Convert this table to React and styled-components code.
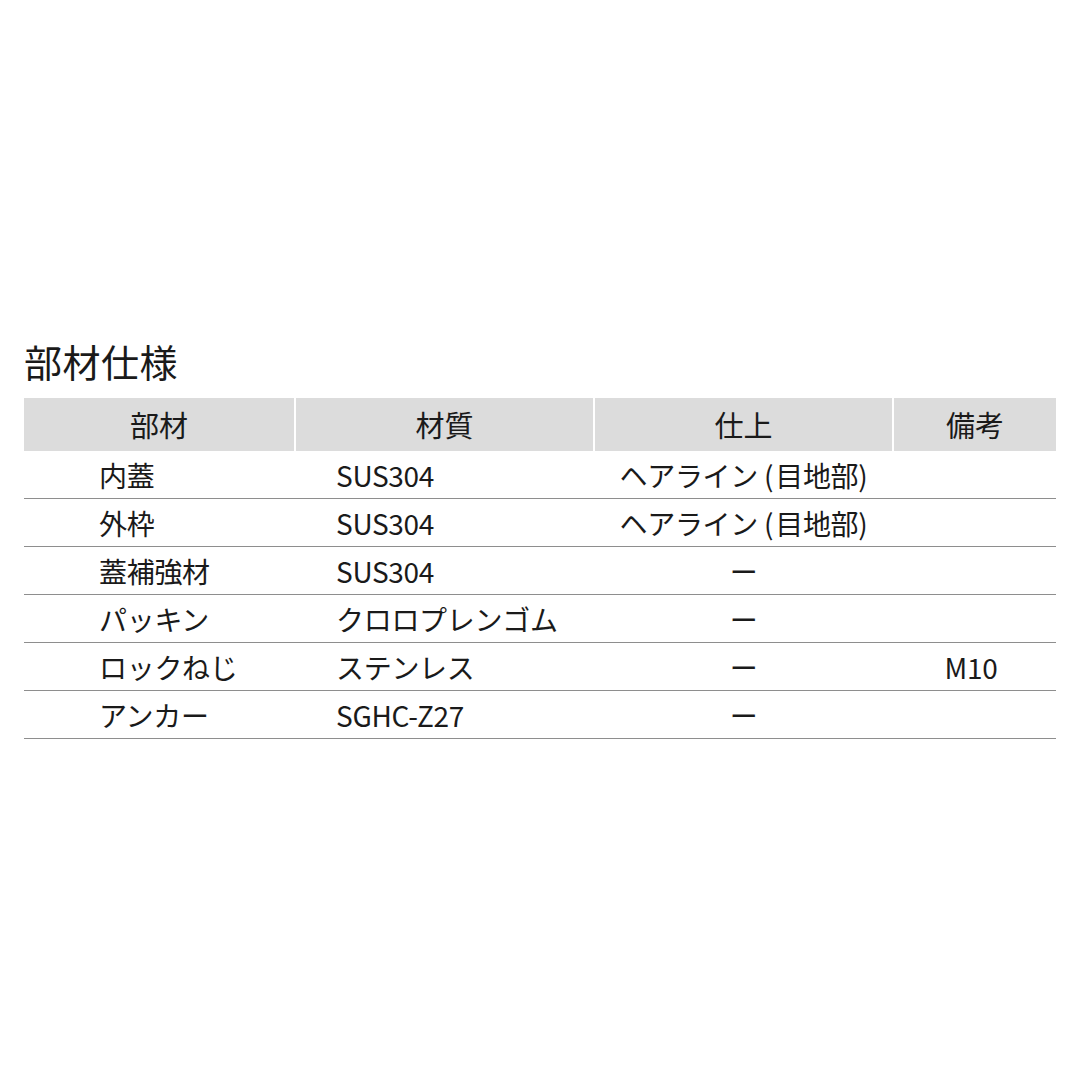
import styled, { createGlobalStyle } from "styled-components";

const GlobalStyle = createGlobalStyle`
  html, body { margin: 0; padding: 0; background: #fff; }
  body { font-family: "Noto Sans CJK JP", "Noto Sans", sans-serif; color: #1a1a1a; }
`;

const Page = styled.div`
  width: 1080px;
  height: 1080px;
  box-sizing: border-box;
  padding: 334px 24px 0 24px;
`;

const Title = styled.h1`
  margin: 0 0 10px 0;
  font-size: 38px;
  font-weight: 400;
  line-height: 54px;
  letter-spacing: 0.5px;
`;

const Row = styled.div`
  display: grid;
  grid-template-columns: 270px 297px 297px 162px;
  column-gap: 2px;
  height: ${p => (p.$head ? "53px" : "47px")};
  border-bottom: ${p => (p.$head ? "none" : "1px solid #8e8e8e")};
`;

const HeadCell = styled.div`
  background: #dcdcdc;
  display: flex;
  align-items: center;
  justify-content: center;
  font-size: 29px;
  line-height: 1;
`;

const Cell = styled.div`
  display: flex;
  align-items: center;
  justify-content: ${p => (p.$center ? "center" : "flex-start")};
  padding-left: ${p => p.$pad || 0}px;
  padding-right: ${p => p.$padR || 0}px;
  font-size: 28px;
  line-height: 1;
  white-space: nowrap;
  letter-spacing: -0.3px;
`;

const Paren = styled.span`
  margin: 0 2px 0 6px;
`;

const Finish = ({ text }) => {
  if (text !== "hairline") return text;
  return (
    <span>
      ヘアライン<Paren>(</Paren>目地部)
    </span>
  );
};

const rows = [
  ["内蓋", "SUS304", "hairline", ""],
  ["外枠", "SUS304", "hairline", ""],
  ["蓋補強材", "SUS304", "ー", ""],
  ["パッキン", "クロロプレンゴム", "ー", ""],
  ["ロックねじ", "ステンレス", "ー", "M10"],
  ["アンカー", "SGHC-Z27", "ー", ""],
];

export default function App() {
  return (
    <Page>
      <GlobalStyle />
      <Title>部材仕様</Title>
      <Row $head>
        <HeadCell>部材</HeadCell>
        <HeadCell>材質</HeadCell>
        <HeadCell>仕上</HeadCell>
        <HeadCell>備考</HeadCell>
      </Row>
      {rows.map((r, i) => (
        <Row key={i}>
          <Cell $pad={75}>{r[0]}</Cell>
          <Cell $pad={40}>{r[1]}</Cell>
          <Cell $center>
            <Finish text={r[2]} />
          </Cell>
          <Cell $center $padR={8}>{r[3]}</Cell>
        </Row>
      ))}
    </Page>
  );
}
